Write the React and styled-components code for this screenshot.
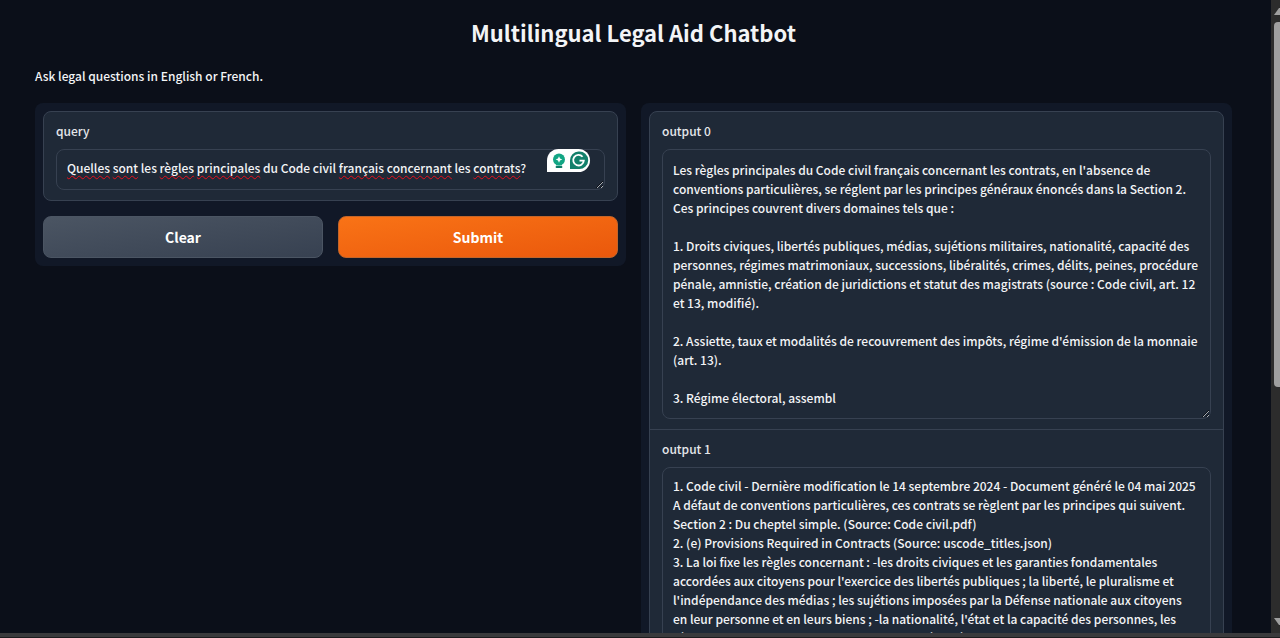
import React, { useState } from "react";
import styled, { createGlobalStyle, css } from "styled-components";

const GlobalStyle = createGlobalStyle`
  *, *::before, *::after { box-sizing: border-box; }
  html { color-scheme: dark; }
  body {
    margin: 0;
    background: #0b0f19;
    color: #f3f4f6;
    font-family: "Noto Sans CJK SC", "Noto Sans", sans-serif;
    font-size: 12px;
    font-weight: 500;
    line-height: 19px;
  }
`;

const Frame = styled.div`
  height: 100vh;
  display: flex;
  flex-direction: column;
`;

const Viewport = styled.div`
  flex: 1;
  min-height: 0;
  display: flex;
`;

const Page = styled.main`
  flex: 1;
  min-width: 0;
  overflow-y: auto;
  scrollbar-width: none;
  padding: 15px 39px 32px 35px;
`;

const Title = styled.h1`
  margin: 0;
  text-align: center;
  font-size: 22px;
  line-height: 34px;
  font-weight: 700;
`;

const Intro = styled.p`
  margin: 17px 0 18px;
`;

const Columns = styled.div`
  display: flex;
  flex-wrap: wrap;
  align-items: flex-start;
  gap: 15px;
`;

const Panel = styled.section`
  flex: 1 1 0;
  min-width: 320px;
  display: flex;
  flex-direction: column;
  gap: 15px;
  padding: 8px;
  border-radius: 8px;
  background: #111827;
`;

const Card = styled.div`
  border: 1px solid #374151;
  border-radius: 8px;
  background: #1f2937;
`;

const Field = styled.div`
  padding: 9px 12px 10px;
  & + & { border-top: 1px solid #374151; }
`;

const Label = styled.label`
  display: block;
  margin-bottom: 9px;
  color: #e5e7eb;
`;

const InputWrap = styled.div`
  position: relative;
  display: flex;
`;

const textBox = css`
  padding: ${(p) => (p.$tight ? "8px 13px 10px 10px" : "10px")};
  border: 1px solid #374151;
  border-radius: 8px;
  font: inherit;
  white-space: pre-wrap;
  overflow-wrap: break-word;
`;

const TextArea = styled.textarea`
  ${textBox}
  display: block;
  width: 100%;
  height: ${(p) => p.$height}px;
  margin: 0;
  background: #1f2937;
  color: #f3f4f6;
  resize: vertical;
  outline: none;
  overflow: hidden;
  &:focus { border-color: #4b5563; }
`;

const SpellLayer = styled.div`
  ${textBox}
  position: absolute;
  inset: 0;
  border-color: transparent;
  color: transparent;
  pointer-events: none;
`;

const Misspelt = styled.span`
  text-decoration: underline wavy #e80f1c 1px;
  text-decoration-skip-ink: none;
  text-underline-offset: 2px;
`;

const Assistant = styled.div`
  position: absolute;
  top: 0;
  right: 15px;
  display: flex;
  width: 43px;
  height: 23px;
  border-radius: 12px 12px 12px 0;
  background: #fff;
`;

const Actions = styled.div`
  display: flex;
  gap: 15px;
`;

const Button = styled.button`
  flex: 1;
  height: 42px;
  border: 1px solid ${(p) => (p.$primary ? "#c2652a" : "#4b5563")};
  border-radius: 8px;
  background: ${(p) =>
    p.$primary
      ? "linear-gradient(to bottom right, #f97316, #ea580c)"
      : "linear-gradient(to bottom right, #4b5563, #374151)"};
  color: #fff;
  font: inherit;
  font-size: 14px;
  font-weight: 700;
  cursor: pointer;
`;

const ScrollTrack = styled.div`
  flex: none;
  width: 9px;
  padding-left: 3px;
  overflow: hidden;
  display: flex;
  flex-direction: column;
  background: #2c2c2c;
`;

const Arrow = styled.svg`
  flex: none;
  width: 12px;
  height: 22px;
`;

const ThumbArea = styled.div`
  flex: 1;
`;

const Thumb = styled.div`
  width: 12px;
  height: 62%;
  border-radius: 4px;
  background: #9f9f9f;
`;

const BottomEdge = styled.div`
  flex: none;
  height: 5px;
  background: #3a3a3c;
  border-bottom: 1px solid #1c1c1e;
`;

const QUERY =
  "Quelles sont les règles principales du Code civil français concernant les contrats?";
const FLAGGED = ["Quelles", "sont", "règles", "principales", "français", "concernant", "contrats"];

const OUTPUT_0 = `Les règles principales du Code civil français concernant les contrats, en l'absence de conventions particulières, se réglent par les principes généraux énoncés dans la Section 2. Ces principes couvrent divers domaines tels que :

1. Droits civiques, libertés publiques, médias, sujétions militaires, nationalité, capacité des personnes, régimes matrimoniaux, successions, libéralités, crimes, délits, peines, procédure pénale, amnistie, création de juridictions et statut des magistrats (source : Code civil, art. 12 et 13, modifié).

2. Assiette, taux et modalités de recouvrement des impôts, régime d'émission de la monnaie (art. 13).

3. Régime électoral, assembl`;

const OUTPUT_1 = `1. Code civil - Dernière modification le 14 septembre 2024 - Document généré le 04 mai 2025
A défaut de conventions particulières, ces contrats se règlent par les principes qui suivent.
Section 2 : Du cheptel simple. (Source: Code civil.pdf)
2. (e) Provisions Required in Contracts (Source: uscode_titles.json)
3. La loi fixe les règles concernant : -les droits civiques et les garanties fondamentales accordées aux citoyens pour l'exercice des libertés publiques ; la liberté, le pluralisme et l'indépendance des médias ; les sujétions imposées par la Défense nationale aux citoyens en leur personne et en leurs biens ; -la nationalité, l'état et la capacité des personnes, les régimes matrimoniaux, les successions et libéralités`;

function SpellMarks({ text }) {
  return (
    <SpellLayer $tight aria-hidden="true">
      {text.split(/([\s?.,;:]+)/).map((part, i) =>
        FLAGGED.includes(part) ? <Misspelt key={i}>{part}</Misspelt> : part
      )}
    </SpellLayer>
  );
}

function AssistantIcons() {
  return (
    <Assistant>
      <svg width="43" height="23" viewBox="0 0 43 23" aria-hidden="true">
        <circle cx="12" cy="10.5" r="6" fill="#12a584" />
        <path d="M9 14h6v2.400H9z" fill="#12a584" />
        <path d="M9.500 18h5" stroke="#0c7a66" strokeWidth="1.800" strokeLinecap="round" />
        <path d="M12 7.200l1 2.300 2.300 1-2.300 1-1 2.300-1-2.300-2.300-1 2.300-1z" fill="#fff" />
        <path d="M31.500 2.500a8.800 8.800 0 1 1 0 17.500H23v-8.700a8.700 8.700 0 0 1 8.500-8.800z" fill="#13806b" />
        <path
          d="M35.600 7.800A5.300 5.300 0 1 0 36.800 11.600H32.500"
          fill="none"
          stroke="#fff"
          strokeWidth="1.800"
        />
      </svg>
    </Assistant>
  );
}

export default function App() {
  const [query, setQuery] = useState(QUERY);
  return (
    <>
      <GlobalStyle />
      <Frame>
        <Viewport>
          <Page>
            <Title>Multilingual Legal Aid Chatbot</Title>
            <Intro>Ask legal questions in English or French.</Intro>
            <Columns>
              <Panel>
                <Card>
                  <Field>
                    <Label htmlFor="query">query</Label>
                    <InputWrap>
                      <TextArea
                        id="query"
                        rows={1}
                        $height={41}
                        $tight
                        spellCheck={false}
                        value={query}
                        onChange={(e) => setQuery(e.target.value)}
                      />
                      <SpellMarks text={query} />
                      <AssistantIcons />
                    </InputWrap>
                  </Field>
                </Card>
                <Actions>
                  <Button type="button" onClick={() => setQuery("")}>Clear</Button>
                  <Button type="button" $primary>Submit</Button>
                </Actions>
              </Panel>
              <Panel>
                <Card>
                  <Field>
                    <Label htmlFor="output-0">output 0</Label>
                    <TextArea id="output-0" $height={270} readOnly spellCheck={false} value={OUTPUT_0} />
                  </Field>
                  <Field>
                    <Label htmlFor="output-1">output 1</Label>
                    <TextArea id="output-1" $height={270} $tight readOnly spellCheck={false} value={OUTPUT_1} />
                  </Field>
                </Card>
              </Panel>
            </Columns>
          </Page>
          <ScrollTrack aria-hidden="true">
            <Arrow viewBox="0 0 12 22"><path d="M0 15L5 8h2l5 7z" fill="#9f9f9f" /></Arrow>
            <ThumbArea><Thumb /></ThumbArea>
            <Arrow viewBox="0 0 12 22"><path d="M0 7l5 7h2l5-7z" fill="#9f9f9f" /></Arrow>
          </ScrollTrack>
        </Viewport>
        <BottomEdge />
      </Frame>
    </>
  );
}
